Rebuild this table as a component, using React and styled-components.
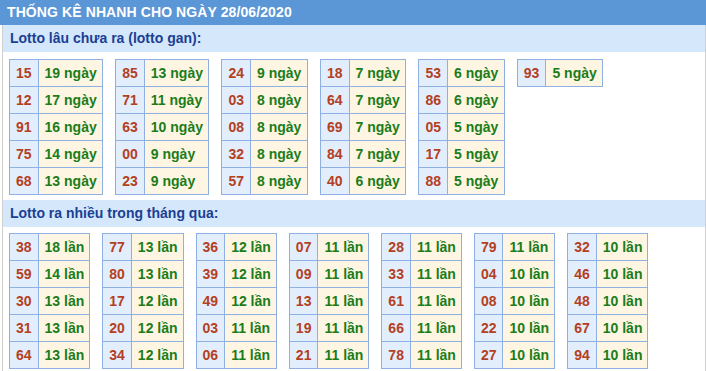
import React from "react";
import styled, { createGlobalStyle } from "styled-components";

const Global = createGlobalStyle`
  html, body { margin: 0; padding: 0; background: #fff; }
  body { font-family: "Liberation Sans", Arial, sans-serif; }
`;

const Page = styled.div`
  width: 706px;
  height: 371px;
  overflow: hidden;
`;

const Title = styled.div`
  height: 25px;
  background: #5b96d6;
  color: #fff;
  font-weight: bold;
  font-size: 14px;
  line-height: 25px;
  padding-left: 7px;
  letter-spacing: 0.1px;
`;

const Body = styled.div`
  margin-left: 2px;
  width: 702px;
  border-left: 1px solid #cfcfcf;
  border-right: 1px solid #cfcfcf;
`;

const SubHeader = styled.div`
  height: 27px;
  line-height: 27px;
  background: #d5e8fb;
  color: #1b3f94;
  font-weight: bold;
  font-size: 14px;
  padding-left: 7px;
`;

const Tables = styled.div`
  display: flex;
  flex-wrap: wrap;
  align-items: flex-start;
  gap: 12px;
  padding: ${(p) => p.$pad};
`;

const Table = styled.table`
  border-collapse: collapse;
  font-size: 14px;
  font-weight: bold;
`;

const Cell = styled.td`
  height: 27px;
  box-sizing: border-box;
  padding: ${(p) => (p.$num ? "0 6px" : `0 ${p.$padR}px 0 6px`)};
  border: 1px solid #8fb0e2;
  white-space: nowrap;
  text-align: ${(p) => (p.$num ? "center" : "left")};
  background: ${(p) => (p.$num ? "#e3eefc" : "#fff5e3")};
  color: ${(p) => (p.$num ? "#b3401f" : "#1a7d1a")};
`;

const gan = [
  [["15", 19], ["12", 17], ["91", 16], ["75", 14], ["68", 13]],
  [["85", 13], ["71", 11], ["63", 10], ["00", 9], ["23", 9]],
  [["24", 9], ["03", 8], ["08", 8], ["32", 8], ["57", 8]],
  [["18", 7], ["64", 7], ["69", 7], ["84", 7], ["40", 6]],
  [["53", 6], ["86", 6], ["05", 5], ["17", 5], ["88", 5]],
  [["93", 5]],
];

const nhieu = [
  [["38", 18], ["59", 14], ["30", 13], ["31", 13], ["64", 13]],
  [["77", 13], ["80", 13], ["17", 12], ["20", 12], ["34", 12]],
  [["36", 12], ["39", 12], ["49", 12], ["03", 11], ["06", 11]],
  [["07", 11], ["09", 11], ["13", 11], ["19", 11], ["21", 11]],
  [["28", 11], ["33", 11], ["61", 11], ["66", 11], ["78", 11]],
  [["79", 11], ["04", 10], ["08", 10], ["22", 10], ["27", 10]],
  [["32", 10], ["46", 10], ["48", 10], ["67", 10], ["94", 10]],
];

function Group({ data, unit, pad, padR }) {
  return (
    <Tables $pad={pad}>
      {data.map((t, i) => (
        <Table key={i}>
          <tbody>
            {t.map(([n, c]) => (
              <tr key={n}>
                <Cell $num>{n}</Cell>
                <Cell $padR={padR}>
                  {c} {unit}
                </Cell>
              </tr>
            ))}
          </tbody>
        </Table>
      ))}
    </Tables>
  );
}

export default function App() {
  return (
    <Page>
      <Global />
      <Title>THỐNG KÊ NHANH CHO NGÀY 28/06/2020</Title>
      <Body>
        <SubHeader>Lotto lâu chưa ra (lotto gan):</SubHeader>
        <Group data={gan} unit="ngày" pad="7px 6px 5px 6px" padR={5.5} />
        <SubHeader>Lotto ra nhiều trong tháng qua:</SubHeader>
        <Group data={nhieu} unit="lần" pad="6px 6px 5px 6px" padR={5} />
      </Body>
    </Page>
  );
}
